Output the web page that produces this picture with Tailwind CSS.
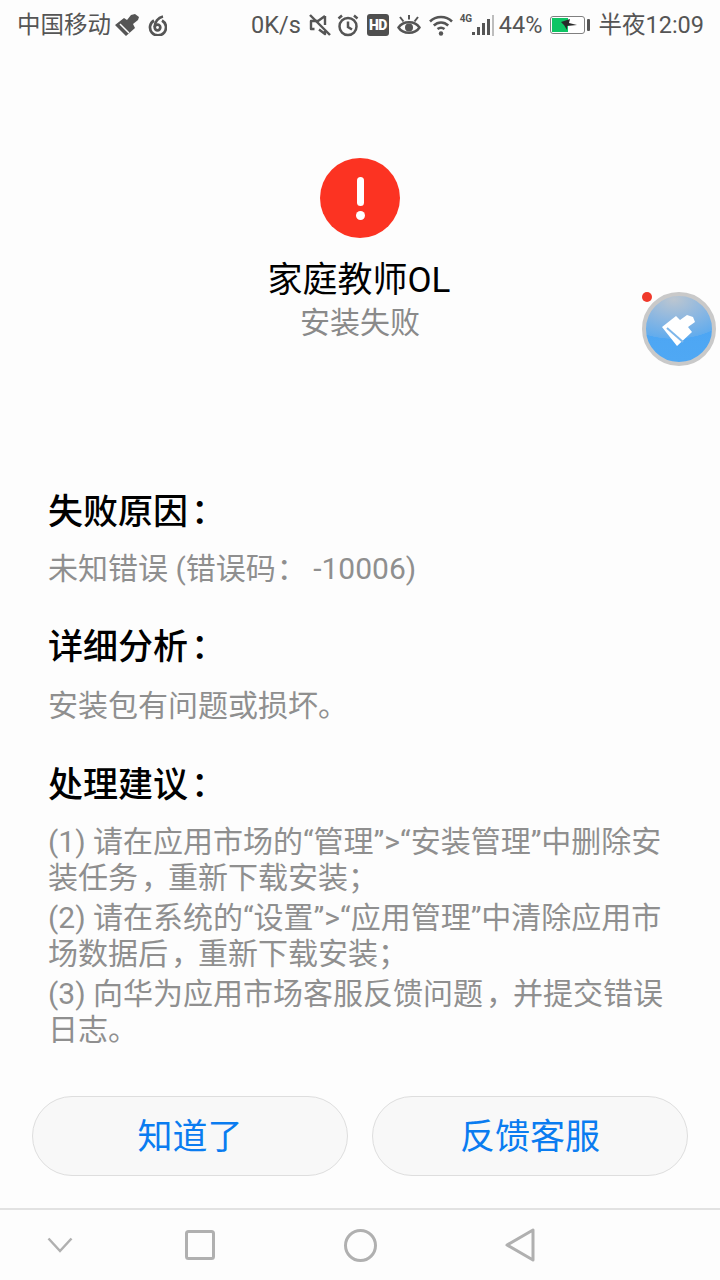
<!DOCTYPE html>
<html lang="zh"><head><meta charset="utf-8">
<script src="https://cdn.jsdelivr.net/npm/@tailwindcss/browser@4"></script>
</head>
<body class="m-0">
<div class="relative w-[720px] h-[1280px] overflow-hidden bg-[#fdfdfd] flex flex-col font-['Roboto','Noto_Sans_CJK_SC',sans-serif]">
  <!-- status bar -->
  <div class="h-12 pt-[1px] flex items-center justify-between pl-[17px] pr-[16px] text-[#555] text-[23.5px] shrink-0">
    <div class="flex items-center">
      <span class="mt-[2px]">中国移动</span>
      <svg class="ml-[4px]" width="24" height="22" viewBox="0 0 24 22"><path d="M0 11 L9 4 L12 6 L16 1 L20 0 L24 3 L23 6 L18 10 L20 14 L11 22 Z" fill="#555"/><path d="M5 10 L14 19" stroke="#fdfdfd" stroke-width="1.500"/></svg>
      <svg class="ml-[9px]" width="19" height="22" viewBox="0 0 19 22" fill="none" stroke="#555" stroke-width="2.700"><path d="M6 6.500 A8 8 0 1 0 14 6.500"/><circle cx="9.500" cy="13.500" r="2.800"/><path d="M6.700 13 C6.700 8 10 3.500 15 2.500"/></svg>
    </div>
    <div class="flex items-center">
      <span class="mt-[2px]">0K/s</span>
      <svg class="ml-[8px]" width="22" height="24" viewBox="0 0 22 24" fill="none" stroke="#555" stroke-width="2.400"><path d="M16 3 L9 8 H2 V16 H5.500 M10 16.500 L16 21 V18 M16 3 V12" stroke-linejoin="round"/><path d="M1 2 L21 22"/></svg>
      <svg class="ml-[6px]" width="22" height="24" viewBox="0 0 22 24" fill="none" stroke="#555" stroke-width="2.500"><circle cx="11" cy="13.500" r="8.500"/><path d="M11 8.500 V14 L15 16.500"/><path d="M1.500 5.500 L5 2.500 M20.500 5.500 L17 2.500"/></svg>
      <div class="ml-[8px] w-[22px] h-[22px] rounded-[3px] bg-[#4f4f4f] text-white text-[14px] leading-[22px] font-black text-center tracking-[-0.5px]">HD</div>
      <svg class="ml-[8px]" width="24" height="22" viewBox="0 0 24 22" fill="none" stroke="#555" stroke-width="2.400"><path d="M1.500 13.500 C6 6.500 18 6.500 22.500 13.500 C18 20.500 6 20.500 1.500 13.500 Z"/><circle cx="12" cy="13.500" r="4" fill="#555" stroke="none"/><path d="M3 3 L6.500 7.500 M21 3 L17.500 7.500 M12 1 V5.500" stroke-width="2"/></svg>
      <svg class="ml-[8px]" width="24" height="22" viewBox="0 0 24 22" fill="none" stroke="#555" stroke-width="2.500"><path d="M1 7.500 C7 1.500 17 1.500 23 7.500"/><path d="M4.800 11.500 C9 7.500 15 7.500 19.200 11.500"/><path d="M8.500 15 C10.500 13.500 13.500 13.500 15.500 15"/><circle cx="12" cy="19.500" r="2.200" fill="#555" stroke="none"/></svg>
      <div class="relative ml-[7px] w-[34px] h-[36px]">
        <span class="absolute left-0 top-[7px] text-[10px] leading-[10px] font-bold tracking-[-0.3px]">4G</span>
        <div class="absolute left-[12px] top-[8px] h-[21px] flex items-end gap-[2px]">
          <i class="block w-[3px] h-[3px] bg-[#555] mb-[1px]"></i><i class="block w-[3px] h-[8px] bg-[#555] mb-[1px]"></i><i class="block w-[3px] h-[12px] bg-[#555] mb-[1px]"></i><i class="block w-[3px] h-[16px] bg-[#555] mb-[1px]"></i><i class="block w-[2px] h-[21px] bg-[#bdbdbd]"></i>
        </div>
      </div>
      <span class="ml-[5px] mt-[2px]">44%</span>
      <div class="ml-[8px] relative w-[35px] h-[18px] rounded-[3px] border-[1.5px] border-[#808080] bg-white p-[1px]">
        <div class="w-[16px] h-full bg-[#0ec564]"></div>
        <svg class="absolute left-[10px] top-0" width="16" height="15" viewBox="0 0 16 15"><path d="M0 5 L9 2 L8 6 L16 8 L6 9 L6 13 L3 8 Z" fill="#2a2a2a"/></svg>
      </div>
      <div class="ml-[2px] w-[3px] h-[12px] rounded-[1px] bg-[#555]"></div>
      <span class="ml-[8px] mt-[2px]">半夜12:09</span>
    </div>
  </div>

  <!-- result header -->
  <div class="flex flex-col items-center pt-[110px] h-[430px] shrink-0">
    <div class="w-20 h-20 rounded-full bg-[#fc3322] flex flex-col items-center justify-center">
      <div class="w-[7px] h-[29px] rounded-full bg-white"></div>
      <div class="mt-[5px] w-[9px] h-[9px] rounded-full bg-white"></div>
    </div>
    <div class="mt-[20px] -ml-[2px] h-[45px] text-[35px] leading-[46px] text-black">家庭教师OL</div>
    <div class="h-[40px] text-[30px] leading-[40px] text-[#8a8a8a]">安装失败</div>
  </div>

  <!-- details -->
  <div class="px-[48px] pt-[13px] flex-1">
    <h2 class="text-[35px] leading-[44px] font-medium text-black">失败原因<span class="leading-none ml-[3px] -mr-[3px] font-['Noto_Sans_CJK_TC']">：</span></h2>
    <p class="mt-[12px] text-[30px] leading-[44px] text-[#8f8f8f]">未知错误 (错误码<span class="leading-none ml-[1px] -mr-[1px] font-['Noto_Sans_CJK_TC']">：</span> -10006)</p>
    <h2 class="mt-[35px] text-[35px] leading-[44px] font-medium text-black">详细分析<span class="leading-none ml-[3px] -mr-[3px] font-['Noto_Sans_CJK_TC']">：</span></h2>
    <p class="mt-[14px] text-[30px] leading-[44px] text-[#8f8f8f]">安装包有问题或损坏。</p>
    <h2 class="mt-[36px] text-[35px] leading-[44px] font-medium text-black">处理建议<span class="leading-none ml-[3px] -mr-[3px] font-['Noto_Sans_CJK_TC']">：</span></h2>
    <div class="mt-[16px] text-[30px] leading-[36px] text-[#8f8f8f] flex flex-col gap-[4px] w-[625px]">
      <p>(1) 请在应用市场的“管理”>“安装管理”中删除安装任务<span class="leading-none ml-[3px] -mr-[3px] font-['Noto_Sans_CJK_TC']">，</span>重新下载安装<span class="leading-none font-['Noto_Sans_CJK_TC']">；</span></p>
      <p>(2) 请在系统的“设置”>“应用管理”中清除应用市场数据后<span class="leading-none ml-[3px] -mr-[3px] font-['Noto_Sans_CJK_TC']">，</span>重新下载安装<span class="leading-none font-['Noto_Sans_CJK_TC']">；</span></p>
      <p>(3) 向华为应用市场客服反馈问题<span class="leading-none ml-[3px] -mr-[3px] font-['Noto_Sans_CJK_TC']">，</span>并提交错误日志。</p>
    </div>
  </div>

  <!-- buttons -->
  <div class="flex gap-6 px-8 pb-[32px] shrink-0">
    <button class="flex-1 h-20 pt-1 rounded-full border border-[#dedede] bg-[#f8f8f8] text-[#0a7cf0] text-[35px]">知道了</button>
    <button class="flex-1 h-20 pt-1 rounded-full border border-[#dedede] bg-[#f8f8f8] text-[#0a7cf0] text-[35px]">反馈客服</button>
  </div>

  <!-- nav bar -->
  <div class="h-[72px] shrink-0 border-t-2 border-[#e2e2e2] bg-[#fdfdfd] flex items-center">
    <div class="w-[120px] flex justify-center"><svg width="26" height="16" viewBox="0 0 26 16" fill="none" stroke="#b0b0b0" stroke-width="2.500"><path d="M1.500 1.500 L13 14 L24.500 1.500"/></svg></div>
    <div class="w-[160px] flex justify-center"><svg width="30" height="30" viewBox="0 0 30 30" fill="none" stroke="#b0b0b0" stroke-width="3"><rect x="1.500" y="1.500" width="27" height="27" rx="2"/></svg></div>
    <div class="w-[160px] flex justify-center"><svg width="33" height="33" viewBox="0 0 33 33" fill="none" stroke="#b0b0b0" stroke-width="3"><circle cx="16.500" cy="16.500" r="15"/></svg></div>
    <div class="w-[160px] flex justify-center"><svg width="30" height="34" viewBox="0 0 30 34" fill="none" stroke="#b0b0b0" stroke-width="3" stroke-linejoin="round"><path d="M28 2 V32 L2 17 Z"/></svg></div>
  </div>

  <!-- floating cleaner -->
  <div class="absolute left-[642px] top-[292px] w-[74px] h-[74px] rounded-full border-[4px] border-[#c9c9c9] bg-[radial-gradient(ellipse_95%_60%_at_42%_5%,#bcc6d0_0%,#8fb8e0_50%,#62aced_99%,transparent_100%),linear-gradient(#4ba4f3,#4fa8f4)] flex items-center justify-center">
    <svg class="mt-[3px]" width="34" height="32" viewBox="0 0 34 32"><path d="M0 12 L14 1 L18 5 L25 0 L31 2 L33 7 L26 12 L30 17 L15 31 Z" fill="#fff"/><path d="M5 13 L21 27" stroke="#7db6ea" stroke-width="2"/></svg>
  </div>
  <div class="absolute left-[642px] top-[292px] w-[10px] h-[10px] rounded-full bg-[#f0392b]"></div>
</div>
</body></html>
